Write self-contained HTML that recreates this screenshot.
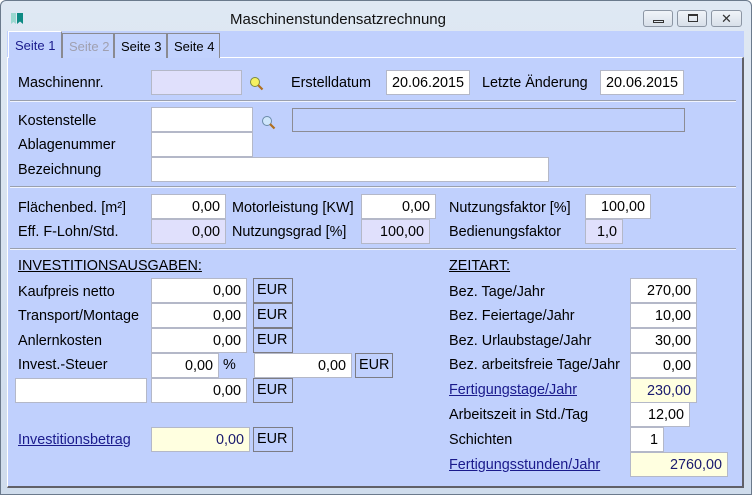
<!DOCTYPE html>
<html><head><meta charset="utf-8"><style>
*{margin:0;padding:0;box-sizing:border-box}
body{width:752px;height:495px;overflow:hidden;background:#fff;font-family:"Liberation Sans",Arial,sans-serif;font-size:14.4px;color:#000;position:relative}
.win{position:absolute;left:0;top:0;width:752px;height:495px;background:linear-gradient(#dfe8f3,#cfdcec);box-shadow:inset 0 0 0 1px #6b7a8c;border-radius:6px 6px 0 0}
.t{position:absolute;white-space:nowrap;line-height:16px;margin-top:1px}
.f{position:absolute;height:25px;background:#fff;border:1px solid #b4b8c8;text-align:right;padding-right:5px;line-height:24px;white-space:nowrap}
.lav{background:#e0e0fc}
.yel{background:#ffffe0;color:#1a1a6e}
.eur{position:absolute;height:25px;border:1px solid #7c7c84;line-height:22px;padding-left:3px;width:40px}
.lnk{color:#1a1a8c;text-decoration:underline}
.sep{position:absolute;left:10px;width:726px;height:2px;border-top:1px solid #9aa0ae;border-bottom:1px solid #f0f4ff}
.tab{position:absolute;top:33px;height:25px;border:1px solid #8a8a90;border-bottom:none;background:#c2d2fd;line-height:25px;padding-left:6px;font-size:13px}
.btn{position:absolute;top:10px;height:17px;border:1px solid #8c96a4;border-radius:3px;background:linear-gradient(#f0f4f9,#d8e0ea)}
</style></head><body>
<div class="win">
<svg style="position:absolute;left:10px;top:12px" width="16" height="13"><path d="M1 1h5v11l-2.5-2L1 12z" fill="#9ad8d0"/><path d="M7 1h6v11l-3-2.5L7 12z" fill="#0d8a84"/></svg>
<div class="t" style="left:230px;top:11px;font-size:15px;color:#111">Maschinenstundensatzrechnung</div>
<div class="btn" style="left:643px;width:30px"><div style="position:absolute;left:9px;top:9px;width:11px;height:3px;border:1px solid #333"></div></div>
<div class="btn" style="left:677px;width:30px"><div style="position:absolute;left:10px;top:3px;width:10px;height:8px;border:1px solid #333;border-top-width:2px"></div></div>
<div class="btn" style="left:711px;width:31px;text-align:center;line-height:15px;font-size:13px;color:#333">✕</div>
<div style="position:absolute;left:7px;top:31px;width:737px;height:457px;background:#c0d0fd"></div>
<div style="position:absolute;left:7px;top:57px;width:737px;height:431px;border-top:1px solid #fff;border-right:2px solid #606068;border-bottom:2px solid #606068;border-left:1px solid #fff"></div>
<div class="tab" style="left:8px;top:31px;width:54px;height:27px;border-color:#fff #8a8a90 #fff #fff;color:#1a1a8c;background:#c0d0fd;line-height:28px">Seite 1</div>
<div class="tab" style="left:62px;width:52px;color:#a0a0b0">Seite 2</div>
<div class="tab" style="left:114px;width:53px">Seite 3</div>
<div class="tab" style="left:167px;width:53px">Seite 4</div>

<div class="t" style="left:18px;top:74px">Maschinennr.</div>
<div class="f lav" style="left:151px;top:70px;width:91px"></div>
<svg style="position:absolute;left:249px;top:76px" width="15" height="15"><circle cx="6" cy="6" r="4.5" fill="#f5f060" stroke="#7a8a40"/><path d="M9 9l4.5 4.5" stroke="#b07020" stroke-width="2.2"/></svg>
<div class="t" style="left:291px;top:74px">Erstelldatum</div>
<div class="f" style="left:386px;top:70px;width:84px;text-align:left;padding-left:5px">20.06.2015</div>
<div class="t" style="left:482px;top:74px">Letzte Änderung</div>
<div class="f" style="left:600px;top:70px;width:84px;text-align:left;padding-left:5px">20.06.2015</div>
<div class="sep" style="top:100px"></div>

<div class="t" style="left:18px;top:112px">Kostenstelle</div>
<div class="f" style="left:151px;top:107px;width:102px"></div>
<svg style="position:absolute;left:261px;top:115px" width="15" height="15"><circle cx="6" cy="6" r="4.5" fill="#cfe6fb" stroke="#6a8aa8"/><path d="M9 9l4.5 4.5" stroke="#b07020" stroke-width="2.2"/></svg>
<div style="position:absolute;left:292px;top:108px;width:393px;height:24px;border:1px solid #8c8c94"></div>
<div class="t" style="left:18px;top:136px">Ablagenummer</div>
<div class="f" style="left:151px;top:132px;width:102px"></div>
<div class="t" style="left:18px;top:161px">Bezeichnung</div>
<div class="f" style="left:151px;top:157px;width:398px"></div>
<div class="sep" style="top:186px"></div>

<div class="t" style="left:18px;top:199px">Flächenbed. [m²]</div>
<div class="f" style="left:151px;top:194px;width:75px">0,00</div>
<div class="t" style="left:232px;top:199px">Motorleistung [KW]</div>
<div class="f" style="left:361px;top:194px;width:75px">0,00</div>
<div class="t" style="left:449px;top:199px">Nutzungsfaktor [%]</div>
<div class="f" style="left:585px;top:194px;width:66px">100,00</div>
<div class="t" style="left:18px;top:223px">Eff. F-Lohn/Std.</div>
<div class="f lav" style="left:151px;top:219px;width:75px">0,00</div>
<div class="t" style="left:232px;top:223px">Nutzungsgrad [%]</div>
<div class="f lav" style="left:361px;top:219px;width:69px">100,00</div>
<div class="t" style="left:449px;top:223px">Bedienungsfaktor</div>
<div class="f lav" style="left:585px;top:219px;width:38px">1,0</div>
<div class="sep" style="top:248px"></div>

<div class="t" style="left:18px;top:257px;text-decoration:underline">INVESTITIONSAUSGABEN:</div>
<div class="t" style="left:449px;top:257px;text-decoration:underline">ZEITART:</div>

<div class="t" style="left:18px;top:283px">Kaufpreis netto</div>
<div class="f" style="left:151px;top:278px;width:96px">0,00</div><div class="eur" style="left:253px;top:278px">EUR</div>
<div class="t" style="left:18px;top:307px">Transport/Montage</div>
<div class="f" style="left:151px;top:303px;width:96px">0,00</div><div class="eur" style="left:253px;top:303px">EUR</div>
<div class="t" style="left:18px;top:332px">Anlernkosten</div>
<div class="f" style="left:151px;top:328px;width:96px">0,00</div><div class="eur" style="left:253px;top:328px">EUR</div>
<div class="t" style="left:18px;top:356px">Invest.-Steuer</div>
<div class="f" style="left:151px;top:353px;width:68px">0,00</div>
<div class="t" style="left:223px;top:356px">%</div>
<div class="f" style="left:254px;top:353px;width:98px">0,00</div><div class="eur" style="left:355px;top:353px;width:38px">EUR</div>
<div class="f" style="left:15px;top:378px;width:132px"></div>
<div class="f" style="left:151px;top:378px;width:96px">0,00</div><div class="eur" style="left:253px;top:378px">EUR</div>

<div class="t lnk" style="left:18px;top:431px">Investitionsbetrag</div>
<div class="f yel" style="left:151px;top:427px;width:99px">0,00</div><div class="eur" style="left:253px;top:427px">EUR</div>

<div class="t" style="left:449px;top:283px">Bez. Tage/Jahr</div>
<div class="f" style="left:630px;top:278px;width:67px">270,00</div>
<div class="t" style="left:449px;top:307px">Bez. Feiertage/Jahr</div>
<div class="f" style="left:630px;top:303px;width:67px">10,00</div>
<div class="t" style="left:449px;top:332px">Bez. Urlaubstage/Jahr</div>
<div class="f" style="left:630px;top:328px;width:67px">30,00</div>
<div class="t" style="left:449px;top:356px">Bez. arbeitsfreie Tage/Jahr</div>
<div class="f" style="left:630px;top:353px;width:67px">0,00</div>
<div class="t lnk" style="left:449px;top:381px">Fertigungstage/Jahr</div>
<div class="f yel" style="left:630px;top:378px;width:67px">230,00</div>
<div class="t" style="left:449px;top:406px">Arbeitszeit in Std./Tag</div>
<div class="f" style="left:630px;top:402px;width:60px">12,00</div>
<div class="t" style="left:449px;top:431px">Schichten</div>
<div class="f" style="left:630px;top:427px;width:34px">1</div>
<div class="t lnk" style="left:449px;top:456px">Fertigungsstunden/Jahr</div>
<div class="f yel" style="left:630px;top:452px;width:98px">2760,00</div>
</div>
</body></html>
